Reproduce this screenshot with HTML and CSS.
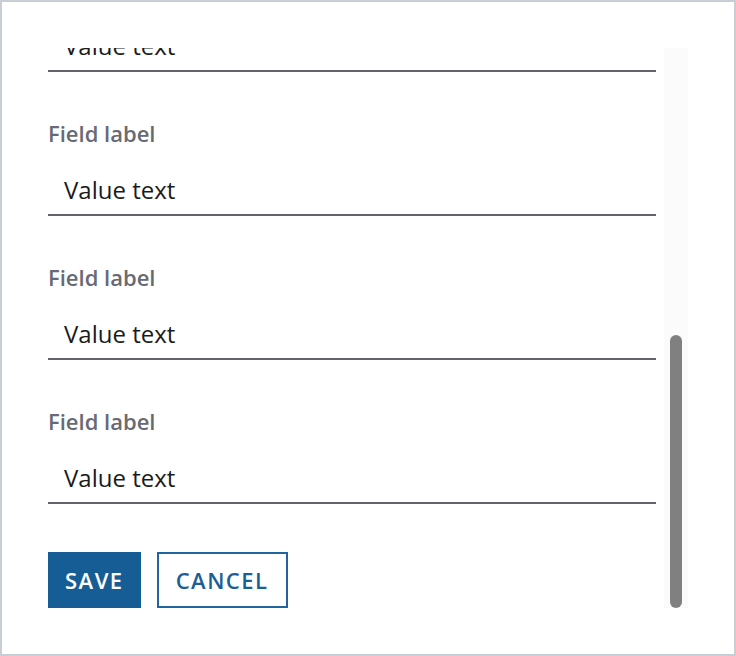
FILE: index.html
```html
<!DOCTYPE html>
<html lang="en">
<head>
    <meta charset="UTF-8">
    <meta name="viewport" content="width=device-width, initial-scale=1.0">
    <title>Edit form</title>
    <link rel="stylesheet" href="styles.css">
</head>
<body>
    <div class="frame">
        <div class="form-pane">
            <div class="form-scroll" id="form-scroll">
                <div class="form-body">
                    <div class="field">
                        <div class="field-label">Field label</div>
                        <div class="field-value">Value text</div>
                    </div>
                    <div class="field">
                        <div class="field-label">Field label</div>
                        <div class="field-value">Value text</div>
                    </div>
                    <div class="field">
                        <div class="field-label">Field label</div>
                        <div class="field-value">Value text</div>
                    </div>
                    <div class="field">
                        <div class="field-label">Field label</div>
                        <div class="field-value">Value text</div>
                    </div>
                    <div class="field">
                        <div class="field-label">Field label</div>
                        <div class="field-value">Value text</div>
                    </div>
                    <div class="field">
                        <div class="field-label">Field label</div>
                        <div class="field-value">Value text</div>
                    </div>
                    <div class="field">
                        <div class="field-label">Field label</div>
                        <div class="field-value">Value text</div>
                    </div>

                    <div class="form-actions">
                        <button class="btn btn-primary">Save</button>
                        <button class="btn btn-outline">Cancel</button>
                    </div>
                </div>
            </div>
            <div class="scroll-track" id="scroll-track">
                <div class="scroll-thumb" id="scroll-thumb"></div>
            </div>
        </div>
    </div>

    <script>
        const scroller = document.getElementById('form-scroll');
        const track = document.getElementById('scroll-track');
        const thumb = document.getElementById('scroll-thumb');

        function updateThumb() {
            const trackHeight = track.clientHeight;
            const ratio = scroller.clientHeight / scroller.scrollHeight;
            const thumbHeight = Math.round(trackHeight * ratio);
            const thumbTop = Math.round(scroller.scrollTop / scroller.scrollHeight * trackHeight);
            thumb.style.height = thumbHeight + 'px';
            thumb.style.marginTop = thumbTop + 'px';
        }

        scroller.addEventListener('scroll', updateThumb);

        // show the end of the form, where the buttons are
        scroller.scrollTop = scroller.scrollHeight;
        updateThumb();
    </script>
</body>
</html>
```

FILE: styles.css
```css
body {
    margin: 0;
    font-family: "Open Sans", sans-serif;
    background: #fff;
}

.frame {
    width: 736px;
    height: 656px;
    box-sizing: border-box;
    border: 2px solid #c9cdd4;
    padding: 46px;
}

.form-pane {
    display: flex;
    height: 100%;
}

.form-scroll {
    flex: 1;
    overflow-y: auto;
    scrollbar-width: none; /* drawn by .scroll-track instead */
}

.form-scroll::-webkit-scrollbar {
    display: none;
}

.scroll-track {
    width: 24px;
    padding: 0 6px 2px;
    box-sizing: border-box;
    background: #fbfbfb;
}

.scroll-thumb {
    width: 12px;
    border-radius: 6px;
    background: #808080;
}

.form-body {
    padding-top: 86px;
    padding-right: 8px;
}

.field {
    margin-top: 48px;
}

.field:first-child {
    margin-top: 0;
}

.field-label {
    font-size: 22px;
    line-height: 26px;
    font-weight: 600;
    color: #676a74;
    margin-bottom: 22px;
}

.field-value {
    font-size: 24px;
    line-height: 32px;
    color: #1b1b1b;
    padding: 6px 16px 8px;
    border-bottom: 2px solid #62636b;
}

.form-actions {
    display: flex;
    gap: 16px;
    margin-top: 48px;
}

.btn {
    height: 56px;
    padding: 0 17px;
    font-family: "Open Sans", sans-serif;
    font-size: 22px;
    font-weight: 600;
    letter-spacing: 1.5px;
    text-transform: uppercase;
    cursor: pointer;
    border-radius: 0;
}

.btn-primary {
    background: #175d95;
    color: #fff;
    border: none;
}

.btn-outline {
    background: #fff;
    color: #1b5e96;
    border: 2px solid #2064a0;
}
```
